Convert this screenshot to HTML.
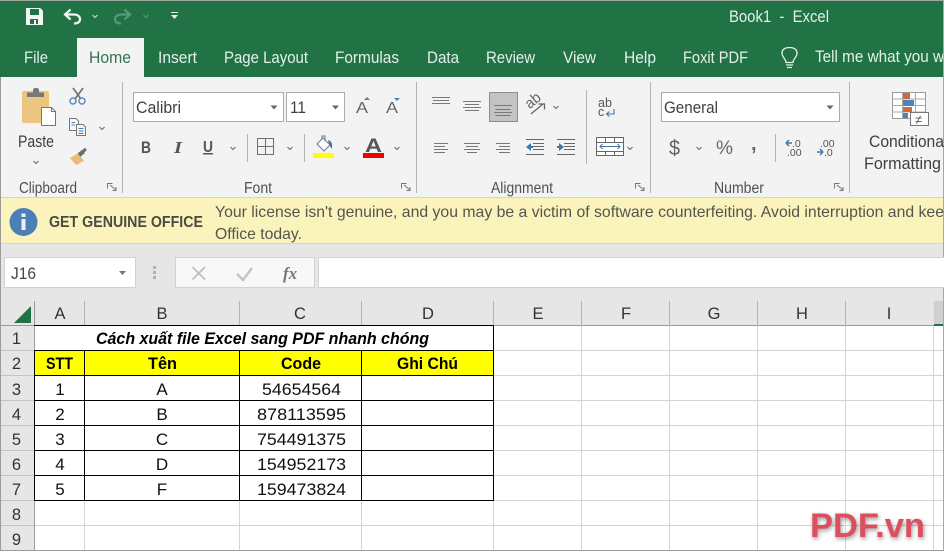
<!DOCTYPE html>
<html><head><meta charset="utf-8">
<style>
html,body{margin:0;padding:0;background:#fff}
svg{display:block}
text{font-family:"Liberation Sans","DejaVu Sans",sans-serif}
.t{font-size:16.500px;fill:#e4f0e9}
.r{font-size:16.500px;fill:#404040}
.g{font-size:15.500px;fill:#505050}
.h{font-size:16.500px;fill:#333}
.c{font-size:17px;fill:#111}
.b{font-size:17px;fill:#000;font-weight:bold}
.l{fill:none;stroke:#777;stroke-width:1}
.ch{fill:none;stroke:#666;stroke-width:1}
</style></head>
<body>
<svg width="944" height="551" viewBox="0 0 944 551" xmlns="http://www.w3.org/2000/svg">
<rect width="944" height="551" fill="#fff"/>
<!-- title bar -->
<rect x="0" y="0" width="944" height="77" fill="#217346"/>
<rect x="0" y="0" width="944" height="1" fill="#9aa89f"/>
<path d="M26.500 8.500H40L42.500 11V24.500H26.500Z" fill="#f2f7f4" stroke="#f2f7f4"/>
<rect x="30" y="9" width="9" height="6" fill="#217346"/>
<rect x="30" y="19" width="8" height="5" fill="#217346"/><rect x="34" y="20" width="2" height="4" fill="#f2f7f4"/>
<path d="M66 14.500H74C78 14.500 80 17 80 19C80 22 78 23.500 74 23.500" fill="none" stroke="#f2f7f4" stroke-width="2.200"/>
<path d="M70.500 9.500L65 14.500L70.500 19.500" fill="none" stroke="#f2f7f4" stroke-width="2.200"/>
<path d="M92.500 15L95 17.500L97.500 15" fill="none" stroke="#cfe2d7" stroke-width="1"/>
<path d="M129 14.500H121C117 14.500 115 17 115 19C115 22 117 23.500 121 23.500" fill="none" stroke="#59997a" stroke-width="2.200"/>
<path d="M124.500 9.500L130 14.500L124.500 19.500" fill="none" stroke="#59997a" stroke-width="2.200"/>
<path d="M143.500 15L146 17.500L148.500 15" fill="none" stroke="#59997a" stroke-width="1"/>
<rect x="171" y="12" width="7" height="1" fill="#e4f0e9"/><path d="M171 15H178L174.500 19Z" fill="#e4f0e9"/>
<text x="729" y="22" class="t" textLength="100" lengthAdjust="spacingAndGlyphs" xml:space="preserve">Book1  -  Excel</text>
<!-- tabs -->
<rect x="77" y="38" width="67" height="40" fill="#f3f3f3"/>
<text x="24" y="63" class="t" textLength="24" lengthAdjust="spacingAndGlyphs">File</text>
<text x="89" y="63" class="t" style="fill:#2f7350" textLength="42" lengthAdjust="spacingAndGlyphs">Home</text>
<text x="158" y="63" class="t" textLength="39" lengthAdjust="spacingAndGlyphs">Insert</text>
<text x="224" y="63" class="t" textLength="84" lengthAdjust="spacingAndGlyphs">Page Layout</text>
<text x="335" y="63" class="t" textLength="64" lengthAdjust="spacingAndGlyphs">Formulas</text>
<text x="427" y="63" class="t" textLength="32" lengthAdjust="spacingAndGlyphs">Data</text>
<text x="486" y="63" class="t" textLength="49" lengthAdjust="spacingAndGlyphs">Review</text>
<text x="563" y="63" class="t" textLength="33" lengthAdjust="spacingAndGlyphs">View</text>
<text x="624" y="63" class="t" textLength="32" lengthAdjust="spacingAndGlyphs">Help</text>
<text x="683" y="63" class="t" textLength="65" lengthAdjust="spacingAndGlyphs">Foxit PDF</text>
<path d="M786 62.500C786 59 782 57.500 782 53C782 49.500 785 47.500 789.500 47.500C794 47.500 797 49.500 797 53C797 57.500 793 59 793 62.500Z" fill="none" stroke="#e4f0e9" stroke-width="1.300"/>
<path d="M786 65H793M787 67.500H792" stroke="#e4f0e9" stroke-width="1.300"/>
<text x="815" y="62" class="t" textLength="129" lengthAdjust="spacingAndGlyphs">Tell me what you w</text>
<!-- ribbon -->
<rect x="0" y="77" width="944" height="120" fill="#f3f3f3"/>
<rect x="0" y="77" width="1" height="474" fill="#9c9c9c"/>
<rect x="943" y="0" width="1" height="551" fill="#a8a8a8"/>
<g fill="#b4b4b4">
<rect x="122" y="82" width="1" height="111"/><rect x="416" y="82" width="1" height="111"/>
<rect x="650" y="82" width="1" height="111"/><rect x="849" y="82" width="1" height="111"/>
<rect x="247" y="134" width="1" height="28"/><rect x="304" y="134" width="1" height="28"/>
<rect x="586" y="90" width="1" height="74"/><rect x="775" y="134" width="1" height="28"/>
</g>
<!-- clipboard -->
<rect x="22" y="91" width="27" height="32" rx="2" fill="#ecc580"/>
<path d="M27 97V92.500H33V90C33 88.500 34 88 36 88C38 88 39 88.500 39 90V92.500H44V97Z" fill="#787878"/>
<path d="M41.500 107.500H51.500L55.500 111.500V125.500H41.500Z" fill="#fff" stroke="#777"/>
<path d="M51.500 107.500V111.500H55.500" fill="none" stroke="#777"/>
<path d="M73 88L81 99M83 88L75 99" stroke="#6f6f6f" stroke-width="1.600"/>
<circle cx="73" cy="101" r="3" fill="none" stroke="#5b8cc0" stroke-width="1.500"/>
<circle cx="82" cy="101" r="3" fill="none" stroke="#5b8cc0" stroke-width="1.500"/>
<path d="M69.500 118.500H76L78.500 121V130.500H69.500Z" fill="#f8f8f8" stroke="#777"/>
<path d="M76.500 124.500H83L85.500 127V135.500H76.500Z" fill="#f8f8f8" stroke="#777"/>
<path d="M71.500 122.500H75M71.500 125H75M78.500 128.500H83.500M78.500 131H83.500M78.500 133.500H83.500" stroke="#4e7fb5" stroke-width="1"/>
<path d="M70 158L78 153L84 161L76 165Z" fill="#e8bd7a"/>
<path d="M78 153L82 150L85 153L80 157Z" fill="#6e6e6e"/><path d="M82 152L86 149" stroke="#6e6e6e" stroke-width="3"/>
<path d="M99.500 127L102 129.500L104.500 127" class="ch"/>
<path d="M33.500 161L36 163.500L38.500 161" class="ch"/>
<text x="18" y="147" class="r" textLength="36" lengthAdjust="spacingAndGlyphs">Paste</text>
<text x="19" y="193" class="g" textLength="58" lengthAdjust="spacingAndGlyphs">Clipboard</text>
<text x="244" y="193" class="g" textLength="28" lengthAdjust="spacingAndGlyphs">Font</text>
<text x="491" y="193" class="g" textLength="62" lengthAdjust="spacingAndGlyphs">Alignment</text>
<text x="714" y="193" class="g" textLength="50" lengthAdjust="spacingAndGlyphs">Number</text>
<!-- launchers -->
<g fill="none" stroke="#777" stroke-width="1">
<path d="M107.500 188.500V183.500H112.500M110 185L116 190M116 187V190.500H112.500"/>
<path d="M401.500 188.500V183.500H406.500M404 185L410 190M410 187V190.500H406.500"/>
<path d="M635.500 188.500V183.500H640.500M638 185L644 190M644 187V190.500H640.500"/>
<path d="M834.500 188.500V183.500H839.500M837 185L843 190M843 187V190.500H839.500"/>
</g>
<!-- font -->
<rect x="133.500" y="92.500" width="150" height="29" fill="#fff" stroke="#ababab"/>
<rect x="286.500" y="92.500" width="58" height="29" fill="#fff" stroke="#ababab"/>
<rect x="661.500" y="92.500" width="178" height="29" fill="#fff" stroke="#ababab"/>
<path d="M270.500 105.500H277.500L274 109.500Z M332 105.500H339L335.500 109.500Z M826.500 105.500H833.500L830 109.500Z" fill="#666"/>
<text x="136" y="113" class="r" textLength="45" lengthAdjust="spacingAndGlyphs">Calibri</text>
<text x="290" y="113" class="r" textLength="16" lengthAdjust="spacingAndGlyphs">11</text>
<text x="664" y="113" class="r" textLength="54" lengthAdjust="spacingAndGlyphs">General</text>
<text x="356" y="113" style="font-size:16px;fill:#666" textLength="12" lengthAdjust="spacingAndGlyphs">A</text>
<path d="M364 100L370 100 367 97Z" fill="#4d82b8"/>
<text x="386" y="113" style="font-size:16px;fill:#666" textLength="12" lengthAdjust="spacingAndGlyphs">A</text>
<path d="M394 98L400 98 397 101Z" fill="#4d82b8"/>
<text x="141" y="153" style="font-size:17px;font-weight:bold;fill:#555" textLength="10" lengthAdjust="spacingAndGlyphs">B</text>
<text x="174" y="153" style="font-size:17px;font-weight:bold;font-style:italic;fill:#555;font-family:'Liberation Serif',serif" textLength="8" lengthAdjust="spacingAndGlyphs">I</text>
<text x="203" y="152" style="font-size:16px;font-weight:bold;fill:#555" textLength="10" lengthAdjust="spacingAndGlyphs">U</text>
<rect x="203" y="153" width="10" height="1.500" fill="#555"/>
<path d="M230.500 147L233 149.500L235.500 147M287.500 147L290 149.500L292.500 147M344.500 147L347 149.500L349.500 147M394.500 147L397 149.500L399.500 147M553.500 106L556 108.500L558.500 106M627.500 147L630 149.500L632.500 147" class="ch"/>
<rect x="257.500" y="138.500" width="16" height="16" fill="none" stroke="#6f6f6f"/>
<path d="M265.500 138.500V154.500M257.500 146.500H273.500" stroke="#6f6f6f"/>
<path d="M317 144L323 138L330 145L324 151Z" fill="#fff" stroke="#777"/>
<path d="M322 139V136H325V141" fill="none" stroke="#777"/>
<path d="M328 140C332 141 333 145 331.500 149L329 144Z" fill="#3f77ad"/>
<rect x="313" y="153" width="21" height="5" fill="#ffff00"/>
<text x="365" y="152" style="font-size:19px;font-weight:bold;fill:#555" textLength="17" lengthAdjust="spacingAndGlyphs">A</text>
<rect x="363" y="153" width="21" height="5" fill="#f00000"/>
<!-- alignment -->
<rect x="489.500" y="92.500" width="28" height="29" fill="#c3c3c3" stroke="#8d8d8d"/>
<path d="M432 97.500H450M433 100.500H449M432 103.500H450" class="l"/>
<path d="M463 101.500H481M465 104.500H479M463 107.500H481M465 110.500H479" class="l"/>
<path d="M494 105.500H512M495.500 109.500H510.500M494 112.500H512M495.500 115.500H510.500" class="l"/>
<text x="527" y="106" transform="rotate(-40 533 104)" style="font-size:15px;fill:#666" textLength="16" lengthAdjust="spacingAndGlyphs">ab</text>
<path d="M531 114L543 104M538.500 104H544.500V109.500" fill="none" stroke="#666" stroke-width="1.300"/>
<path d="M434 143.500H448M434 146.500H445M434 149.500H448M434 152.500H445" class="l"/>
<path d="M464 143.500H480M466 146.500H478M464 149.500H480M467 152.500H477" class="l"/>
<path d="M496 143.500H510M499 146.500H510M496 149.500H510M499 152.500H510" class="l"/>
<path d="M526 139.500H544M533 143.500H544M533 146.500H544M533 149.500H544M526 154.500H544" stroke="#666" fill="none"/>
<path d="M526 147L531 143V151Z" fill="#3f77ad"/><path d="M529 147H533" stroke="#3f77ad" stroke-width="2"/>
<path d="M557 139.500H575M564 143.500H575M564 146.500H575M564 149.500H575M557 154.500H575" stroke="#666" fill="none"/>
<path d="M563 147L558 143V151Z" transform="translate(1 0)" fill="#3f77ad"/><path d="M557 147H560" stroke="#3f77ad" stroke-width="2"/>
<text x="598" y="107" style="font-size:12.500px;fill:#555" textLength="14" lengthAdjust="spacing">ab</text>
<text x="598" y="116" style="font-size:12.500px;fill:#555">c</text>
<path d="M614 109V114H607M609.500 111.500L606.500 114L609.500 116.500" fill="none" stroke="#3f77ad" stroke-width="1.100"/>
<rect x="596.500" y="137.500" width="27" height="18" fill="#fff" stroke="#666"/>
<path d="M596.500 142.500H623.500M596.500 151.500H623.500M605.500 137.500V142.500M614.500 137.500V142.500M605.500 151.500V155.500M614.500 151.500V155.500" stroke="#666" fill="none"/>
<path d="M600 146.500H620M602.500 144L600 146.500L602.500 149M617.500 144L620 146.500L617.500 149" stroke="#3f77ad" fill="none"/>
<!-- number -->
<text x="669" y="155" style="font-size:21px;fill:#666" textLength="11" lengthAdjust="spacingAndGlyphs">$</text>
<path d="M696.500 147L699 149.500L701.500 147" class="ch"/>
<text x="716" y="154" style="font-size:19px;fill:#666" textLength="17" lengthAdjust="spacingAndGlyphs">%</text>
<text x="751" y="150" style="font-size:20px;font-weight:bold;fill:#666">,</text>
<path d="M786 143H792M786 143L789 140M786 143L789 146" stroke="#3f77ad" fill="none" stroke-width="1.500"/>
<text x="792" y="147" style="font-size:10.500px;fill:#555">.0</text>
<text x="787" y="156" style="font-size:10.500px;fill:#555">.00</text>
<text x="820" y="147" style="font-size:10.500px;fill:#555">.00</text>
<path d="M817 152H823M823 152L820 149M823 152L820 155" stroke="#3f77ad" fill="none" stroke-width="1.500"/>
<text x="824" y="156" style="font-size:10.500px;fill:#555">.0</text>
<!-- conditional -->
<rect x="892.500" y="92.500" width="33" height="26" fill="#fff" stroke="#999"/>
<path d="M892.500 99H925.500M892.500 105.500H925.500M892.500 112H925.500M902.500 92.500V118.500M915.500 92.500V118.500" stroke="#aaa" fill="none"/>
<rect x="903" y="93" width="7" height="6" fill="#d2693c"/><rect x="903" y="100" width="11" height="6" fill="#4f81bd"/>
<rect x="903" y="107" width="9" height="5" fill="#d2693c"/><rect x="903" y="113" width="5" height="5" fill="#4f81bd"/>
<rect x="910.500" y="112.500" width="18" height="13" fill="#fff" stroke="#777"/>
<text x="915" y="124" style="font-size:13px;fill:#555">≠</text>
<text x="869" y="147" class="r" textLength="75" lengthAdjust="spacingAndGlyphs">Conditiona</text>
<text x="864" y="169" class="r" textLength="77" lengthAdjust="spacingAndGlyphs">Formatting</text>
<!-- banner -->
<rect x="1" y="197" width="942" height="1" fill="#d8d8b8"/>
<rect x="1" y="198" width="942" height="46" fill="#fbf3bc"/>
<rect x="1" y="243" width="942" height="1" fill="#ddd9a8"/>
<circle cx="23.500" cy="222" r="14" fill="#4b7fb5"/>
<rect x="21.500" y="219" width="4" height="11" fill="#eaf1f8"/><rect x="21.500" y="213.500" width="4" height="3.500" fill="#eaf1f8"/>
<text x="49" y="227" style="font-size:15.500px;font-weight:bold;fill:#4a4a42" textLength="154" lengthAdjust="spacingAndGlyphs">GET GENUINE OFFICE</text>
<text x="215" y="217" style="font-size:16px;fill:#55554d" textLength="729" lengthAdjust="spacingAndGlyphs">Your license isn't genuine, and you may be a victim of software counterfeiting. Avoid interruption and kee</text>
<text x="215" y="239" style="font-size:16px;fill:#55554d" textLength="87" lengthAdjust="spacingAndGlyphs">Office today.</text>
<!-- formula bar -->
<rect x="1" y="244" width="942" height="57" fill="#e6e6e6"/>
<rect x="4.500" y="257.500" width="131" height="30" fill="#fff" stroke="#d2d2d2"/>
<text x="11" y="279" style="font-size:16.500px;fill:#444" textLength="25" lengthAdjust="spacingAndGlyphs">J16</text>
<path d="M119 271H126L122.500 275Z" fill="#777"/>
<rect x="153" y="266" width="3" height="3" fill="#b0b0b0"/><rect x="153" y="271" width="3" height="3" fill="#b0b0b0"/><rect x="153" y="276" width="3" height="3" fill="#b0b0b0"/>
<rect x="175.500" y="257.500" width="139" height="30" fill="#f8f8f8" stroke="#d2d2d2"/>
<rect x="318.500" y="257.500" width="626" height="30" fill="#fff" stroke="#d2d2d2"/>
<path d="M192.500 267L205 279.500M205 267L192.500 279.500" stroke="#bdbdbd" stroke-width="1.700"/>
<path d="M237 274L243 280L252 268" fill="none" stroke="#c4c4c4" stroke-width="2.500"/>
<text x="283" y="279" style="font-family:'Liberation Serif',serif;font-size:17px;font-style:italic;font-weight:bold;fill:#777">fx</text>
<!-- column headers -->
<rect x="1" y="301" width="942" height="25" fill="#e6e6e6"/>
<rect x="1" y="325" width="942" height="1" fill="#9b9b9b"/>
<path d="M31 306V323H14Z" fill="#217346"/>
<path d="M34.500 301V326M84.500 301V326M239.500 301V326M361.500 301V326M493.500 301V326M581.500 301V326M669.500 301V326M757.500 301V326M845.500 301V326" stroke="#b4b4b4"/>
<g text-anchor="middle">
<text x="60" y="319" class="h">A</text><text x="162" y="319" class="h">B</text><text x="300" y="319" class="h">C</text><text x="428" y="319" class="h">D</text>
<text x="538" y="319" class="h">E</text><text x="626" y="319" class="h">F</text><text x="714" y="319" class="h">G</text><text x="802" y="319" class="h">H</text><text x="889" y="319" class="h">I</text>
</g>
<rect x="934" y="301" width="9" height="23" fill="#d0d0d0"/>
<rect x="934" y="324" width="9" height="2" fill="#217346"/>
<!-- row headers -->
<rect x="1" y="326" width="33" height="225" fill="#e6e6e6"/>
<rect x="34" y="301" width="1" height="250" fill="#9b9b9b"/>
<path d="M1 350.500H34M1 375.500H34M1 400.500H34M1 425.500H34M1 450.500H34M1 475.500H34M1 500.500H34M1 525.500H34" stroke="#c4c4c4"/>
<g text-anchor="middle">
<text x="16.500" y="344" class="h">1</text><text x="16.500" y="369" class="h">2</text><text x="16.500" y="395" class="h">3</text>
<text x="16.500" y="420" class="h">4</text><text x="16.500" y="445" class="h">5</text><text x="16.500" y="470" class="h">6</text>
<text x="16.500" y="495" class="h">7</text><text x="16.500" y="520" class="h">8</text><text x="16.500" y="545" class="h">9</text>
</g>
<!-- grid -->
<path d="M35 350.500H943M35 375.500H943M35 400.500H943M35 425.500H943M35 450.500H943M35 475.500H943M35 500.500H943M35 525.500H943M84.500 500V551M239.500 500V551M361.500 500V551M493.500 326V551M581.500 326V551M669.500 326V551M757.500 326V551M845.500 326V551M933.500 326V551" stroke="#d4d4d4" fill="none"/>
<rect x="35" y="351" width="459" height="25" fill="#ffff00"/>
<path d="M34 325.500H494M34 350.500H494M34 375.500H494M34 400.500H494M34 425.500H494M34 450.500H494M34 475.500H494M34 500.500H494M34.500 350V501M84.500 350V501M239.500 350V501M361.500 350V501M493.500 325V501" stroke="#000" fill="none"/>
<rect x="0" y="550" width="944" height="1" fill="#9c9c9c"/>
<!-- cells -->
<text x="96" y="344" class="b" style="font-style:italic" textLength="333" lengthAdjust="spacingAndGlyphs">Cách xuất file Excel sang PDF nhanh chóng</text>
<text x="46" y="369" class="b" textLength="27" lengthAdjust="spacingAndGlyphs">STT</text>
<text x="148" y="369" class="b" textLength="29" lengthAdjust="spacingAndGlyphs">Tên</text>
<text x="281" y="369" class="b" textLength="40" lengthAdjust="spacingAndGlyphs">Code</text>
<text x="397" y="369" class="b" textLength="61" lengthAdjust="spacingAndGlyphs">Ghi Chú</text>
<g text-anchor="middle">
<text x="60" y="395" class="c">1</text><text x="60" y="420" class="c">2</text><text x="60" y="445" class="c">3</text><text x="60" y="470" class="c">4</text><text x="60" y="495" class="c">5</text>
<text x="162" y="395" class="c">A</text><text x="162" y="420" class="c">B</text><text x="162" y="445" class="c">C</text><text x="162" y="470" class="c">D</text><text x="162" y="495" class="c">F</text>
</g>
<text x="262" y="395" class="c" textLength="79" lengthAdjust="spacingAndGlyphs">54654564</text>
<text x="257" y="420" class="c" textLength="89" lengthAdjust="spacingAndGlyphs">878113595</text>
<text x="257" y="445" class="c" textLength="89" lengthAdjust="spacingAndGlyphs">754491375</text>
<text x="257" y="470" class="c" textLength="89" lengthAdjust="spacingAndGlyphs">154952173</text>
<text x="257" y="495" class="c" textLength="89" lengthAdjust="spacingAndGlyphs">159473824</text>
<!-- watermark -->
<text x="810" y="537" style="font-size:34px;font-weight:bold;fill:#dd4f5e;filter:drop-shadow(1px 2px 2px rgba(0,0,0,.4))" textLength="115" lengthAdjust="spacingAndGlyphs">PDF.vn</text>
</svg>
</body></html>
